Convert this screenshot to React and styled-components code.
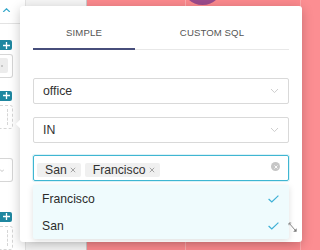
import React from "react";
import styled, { createGlobalStyle } from "styled-components";

const Global = createGlobalStyle`
  html, body { margin: 0; padding: 0; }
  body {
    width: 320px; height: 250px; overflow: hidden;
    font-family: "Liberation Sans", Arial, Helvetica, sans-serif;
    -webkit-font-smoothing: antialiased;
  }
`;

const Page = styled.div`
  position: relative;
  display: flex;
  width: 320px;
  height: 250px;
  overflow: hidden;
`;

const Sidebar = styled.div`
  width: 25px;
  flex: none;
  background: #fff;
  border-right: 1px solid #e4e4e4;
  display: flex;
  flex-direction: column;
`;

const UpChevron = styled.svg`
  display: block;
  margin: 8px 0 0 2px;
`;

const SideDivider = styled.div`
  margin-top: 11px;
  width: 22px;
  height: 1px;
  background: #e3e3e3;
`;

const PlusBtn = styled.div`
  margin-top: ${(p) => p.$mt}px;
  width: 12px;
  height: 11px;
  background: #1f87a0;
  border-radius: 0 2px 2px 0;
  display: flex;
  align-items: center;
  justify-content: center;
  color: #fff;
`;

const FieldBox = styled.div`
  margin-top: ${(p) => p.$mt}px;
  width: 13px;
  height: ${(p) => p.$h || 26}px;
  box-sizing: border-box;
  border: 1px ${(p) => (p.$dashed ? "dashed" : "solid")} #d6d6d6;
  border-left: none;
  border-radius: 0 3px 3px 0;
  display: flex;
  align-items: ${(p) => (p.$center ? "center" : "stretch")};
  padding: ${(p) => (p.$pad ? "3px 4px 4px 0" : "0")};
`;

const GrayFill = styled.div`
  flex: 1;
  background: #ececec;
  border-radius: 0 2px 2px 0;
  display: flex;
  align-items: center;
`;

const Dot = styled.div`
  width: 2px;
  height: 2px;
  margin-left: 1px;
  border-radius: 50%;
  background: #bbb;
`;

const InnerDash = styled.div`
  width: 7px;
  margin: 3px 0;
  border-right: 1px dashed #d6d6d6;
`;

const Column2 = styled.div`
  width: 60px;
  flex: none;
  background: #f5f5f5;
  border-right: 1px solid #cdcdcd;
`;

const Main = styled.div`
  flex: 1;
  position: relative;
  display: flex;
  background: #fb898d;
`;

const Cell = styled.div`
  width: ${(p) => p.$w}px;
  flex: ${(p) => (p.$w ? "none" : "1")};
  background: ${(p) => p.$bg};
  border-right: ${(p) => (p.$line ? "1px solid rgba(255,255,255,0.28)" : "none")};
`;

const Bubble = styled.div`
  position: absolute;
  left: 95px;
  top: -36px;
  width: 41px;
  height: 41px;
  border-radius: 50%;
  background: #9b4a8b;
`;

const Popover = styled.div`
  position: absolute;
  left: 20px;
  top: 6px;
  width: 282px;
  height: 236px;
  box-sizing: border-box;
  padding: 13px 13px 0 13px;
  background: #fff;
  border-radius: 3px;
  box-shadow: 0 3px 12px rgba(0, 0, 0, 0.22);
`;

const Arrow = styled.div`
  position: absolute;
  left: -3px;
  top: 115px;
  width: 6px;
  height: 6px;
  background: #fff;
  transform: rotate(45deg);
`;

const TabBar = styled.div`
  display: grid;
  grid-template-columns: 102px 1fr;
  height: 30px;
  border-bottom: 1px solid #e8e8e8;
`;

const Tab = styled.div`
  height: 31px;
  box-sizing: border-box;
  padding-bottom: 2px;
  border-bottom: 2px solid ${(p) => (p.$active ? "#474e7b" : "transparent")};
  display: flex;
  align-items: center;
  justify-content: center;
  font-size: 9.6px;
  color: #555;
  letter-spacing: 0.1px;
`;

const Form = styled.div`
  margin-top: 28px;
  display: flex;
  flex-direction: column;
`;

const Select = styled.div`
  height: 26px;
  margin-top: ${(p) => p.$mt || 0}px;
  box-sizing: border-box;
  border: 1px solid #d9d9d9;
  border-radius: 2px;
  padding: 0 9px 0 9px;
  display: flex;
  align-items: center;
  justify-content: space-between;
  font-size: 12.3px;
  color: #333;
`;

const MultiWrap = styled.div`
  position: relative;
  margin-top: 12px;
`;

const Multi = styled.div`
  height: 26px;
  box-sizing: border-box;
  border: 1px solid #3fb6d2;
  border-radius: 2px;
  box-shadow: 0 0 0 1px rgba(63, 182, 210, 0.18);
  padding: 0 8px 3px 3px;
  display: flex;
  align-items: flex-end;
  gap: 4px;
`;

const Tag = styled.div`
  height: 14px;
  line-height: 14px;
  padding: 0 5px 0 8px;
  background: #f0f0f0;
  border-radius: 2px;
  display: flex;
  align-items: center;
  font-size: 12.2px;
  color: #333;
`;

const TagX = styled.svg`
  display: block;
  margin-left: 3px;
`;

const Clear = styled.div`
  margin-left: auto;
  align-self: center;
  width: 9px;
  height: 9px;
  border-radius: 50%;
  background: #c6c6c6;
  display: flex;
  align-items: center;
  justify-content: center;
`;

const Menu = styled.div`
  position: absolute;
  left: 0;
  right: 0;
  top: 30px;
  background: #effbfd;
  border-radius: 0 0 2px 2px;
  box-shadow: 0 2px 6px rgba(0, 0, 0, 0.13);
`;

const Option = styled.div`
  height: 27px;
  padding: 0 10px 0 9px;
  display: flex;
  align-items: center;
  justify-content: space-between;
  font-size: 12.2px;
  color: #2b2b2b;
`;

const Resize = styled.svg`
  position: absolute;
  left: 268px;
  top: 216px;
`;

const Chevron = () => (
  <svg width="9" height="6" viewBox="0 0 9 6">
    <path d="M1 1 L4.5 4.6 L8 1" fill="none" stroke="#c8c8c8" strokeWidth="0.9" />
  </svg>
);

const Check = () => (
  <svg width="11" height="8" viewBox="0 0 11 8">
    <path d="M0.6 4 L3.8 7 L10.4 0.6" fill="none" stroke="#3eb0d6" strokeWidth="1.2" />
  </svg>
);

const SmallX = () => (
  <TagX width="6" height="6" viewBox="0 0 6 6">
    <path d="M0.8 0.8 L5.2 5.2 M5.2 0.8 L0.8 5.2" stroke="#9a9a9a" strokeWidth="0.9" />
  </TagX>
);

const Plus = () => (
  <svg width="7" height="7" viewBox="0 0 7 7">
    <path d="M3.5 0 V7 M0 3.5 H7" stroke="#fff" strokeWidth="1.3" />
  </svg>
);

export default function App() {
  return (
    <Page>
      <Global />
      <Sidebar>
        <UpChevron width="9" height="5" viewBox="0 0 9 5">
          <path d="M0.8 4.4 L4.5 0.9 L8.2 4.4" fill="none" stroke="#35a8cb" strokeWidth="1.4" />
        </UpChevron>
        <SideDivider />
        <PlusBtn $mt={16}>
          <Plus />
        </PlusBtn>
        <FieldBox $mt={4} $pad>
          <GrayFill>
            <Dot />
          </GrayFill>
        </FieldBox>
        <PlusBtn $mt={13}>
          <Plus />
        </PlusBtn>
        <FieldBox $mt={4} $h={27} $dashed>
          <InnerDash />
        </FieldBox>
        <FieldBox $mt={29} $h={27} $center>
          <svg width="4" height="3" viewBox="0 0 4 3">
            <path d="M0 0.5 L2 2.5 L4 0.5" fill="none" stroke="#bdbdbd" strokeWidth="0.9" />
          </svg>
        </FieldBox>
        <PlusBtn $mt={30}>
          <Plus />
        </PlusBtn>
        <FieldBox $mt={4} $h={27} $dashed>
          <InnerDash />
        </FieldBox>
      </Sidebar>
      <Column2 />
      <Main>
        <Cell $w={98} $bg="#fb898d" $line />
        <Cell $w={114} $bg="#fb898d" $line />
        <Cell $bg="#fc8e92" />
        <Bubble />
      </Main>

      <Popover>
        <Arrow />
        <TabBar>
          <Tab $active>SIMPLE</Tab>
          <Tab>CUSTOM SQL</Tab>
        </TabBar>
        <Form>
          <Select>
            <span>office</span>
            <Chevron />
          </Select>
          <Select $mt={13}>
            <span>IN</span>
            <Chevron />
          </Select>
          <MultiWrap>
            <Multi>
              <Tag>
                San
                <SmallX />
              </Tag>
              <Tag>
                Francisco
                <SmallX />
              </Tag>
              <Clear>
                <svg width="4" height="4" viewBox="0 0 4 4">
                  <path d="M0.5 0.5 L3.5 3.5 M3.5 0.5 L0.5 3.5" stroke="#fff" strokeWidth="0.9" />
                </svg>
              </Clear>
            </Multi>
            <Menu>
              <Option>
                <span>Francisco</span>
                <Check />
              </Option>
              <Option>
                <span>San</span>
                <Check />
              </Option>
            </Menu>
          </MultiWrap>
        </Form>
        <Resize width="10" height="11" viewBox="0 0 10 11">
          <path d="M1 1 L7 8" stroke="#8a8a8a" strokeWidth="1" />
          <path d="M1 1 L1 3.2 M1 1 L3.2 1" stroke="#8a8a8a" strokeWidth="1" />
          <path d="M8.6 9.8 L8.6 6.2 L5.2 9.8 Z" fill="#777" />
        </Resize>
      </Popover>
    </Page>
  );
}
